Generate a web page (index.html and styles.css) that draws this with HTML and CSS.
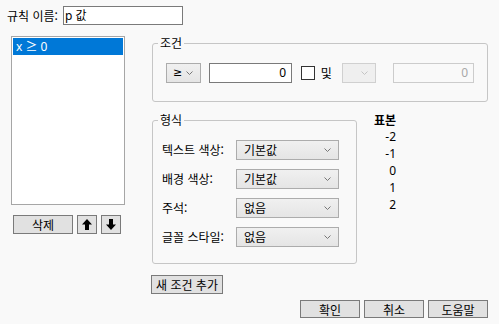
FILE: index.html
```html
<!DOCTYPE html>
<html lang="ko">
<head>
    <meta charset="UTF-8">
    <title>규칙</title>
    <link rel="stylesheet" href="styles.css">
</head>
<body>
    <div class="page">
        <div class="name-row">
            <span class="name-label">규칙 이름:</span>
            <div class="field name-field">p 값</div>
        </div>

        <div class="main">
            <div class="left-col">
                <div class="rule-list">
                    <div class="rule-item selected">x ≥ 0</div>
                </div>
                <div class="list-buttons">
                    <button class="button delete-button">삭제</button>
                    <button class="button arrow-button">
                        <svg width="10" height="11" viewBox="0 0 10 11"><path d="M5 0 L10 5.5 H7 V11 H3 V5.5 H0 Z" fill="#000"/></svg>
                    </button>
                    <button class="button arrow-button">
                        <svg width="10" height="11" viewBox="0 0 10 11"><path d="M5 11 L10 5.5 H7 V0 H3 V5.5 H0 Z" fill="#000"/></svg>
                    </button>
                </div>
            </div>

            <div class="right-col">
                <fieldset class="group condition-group">
                    <legend>조건</legend>
                    <div class="condition-row">
                        <div class="dropdown op-dropdown">
                            <span class="op-text">≥</span>
                            <svg class="chevron" width="7" height="5" viewBox="0 0 7 5"><path d="M0.5 0.5 L3.5 3.5 L6.5 0.5" fill="none" stroke="#777"/></svg>
                        </div>
                        <div class="field value-field">0</div>
                        <span class="checkbox"></span>
                        <span class="and-label">및</span>
                        <div class="dropdown op-dropdown disabled">
                            <svg class="chevron" width="7" height="5" viewBox="0 0 7 5"><path d="M0.5 0.5 L3.5 3.5 L6.5 0.5" fill="none" stroke="#c4c4c4"/></svg>
                        </div>
                        <div class="field value-field disabled">0</div>
                    </div>
                </fieldset>

                <div class="format-row">
                    <fieldset class="group format-group">
                        <legend>형식</legend>
                        <div class="format-line">
                            <span class="format-label">텍스트 색상:</span>
                            <div class="dropdown format-dropdown">
                                <span>기본값</span>
                                <svg class="chevron" width="7" height="5" viewBox="0 0 7 5"><path d="M0.5 0.5 L3.5 3.5 L6.5 0.5" fill="none" stroke="#777"/></svg>
                            </div>
                        </div>
                        <div class="format-line">
                            <span class="format-label">배경 색상:</span>
                            <div class="dropdown format-dropdown">
                                <span>기본값</span>
                                <svg class="chevron" width="7" height="5" viewBox="0 0 7 5"><path d="M0.5 0.5 L3.5 3.5 L6.5 0.5" fill="none" stroke="#777"/></svg>
                            </div>
                        </div>
                        <div class="format-line">
                            <span class="format-label">주석:</span>
                            <div class="dropdown format-dropdown">
                                <span>없음</span>
                                <svg class="chevron" width="7" height="5" viewBox="0 0 7 5"><path d="M0.5 0.5 L3.5 3.5 L6.5 0.5" fill="none" stroke="#777"/></svg>
                            </div>
                        </div>
                        <div class="format-line">
                            <span class="format-label">글꼴 스타일:</span>
                            <div class="dropdown format-dropdown">
                                <span>없음</span>
                                <svg class="chevron" width="7" height="5" viewBox="0 0 7 5"><path d="M0.5 0.5 L3.5 3.5 L6.5 0.5" fill="none" stroke="#777"/></svg>
                            </div>
                        </div>
                    </fieldset>

                    <div class="sample">
                        <div class="sample-title">표본</div>
                        <div>-2</div>
                        <div>-1</div>
                        <div>0</div>
                        <div>1</div>
                        <div>2</div>
                    </div>
                </div>

                <button class="button add-button">새 조건 추가</button>
            </div>
        </div>

        <div class="dialog-buttons">
            <button class="button dialog-button">확인</button>
            <button class="button dialog-button">취소</button>
            <button class="button dialog-button">도움말</button>
        </div>
    </div>
</body>
</html>
```

FILE: styles.css
```css
body {
    margin: 0;
    background-color: #f9f9f9;
    color: #000000;
    font-family: "Noto Sans CJK KR", "Noto Sans", sans-serif;
    font-size: 12px;
    line-height: 16px;
}
.page {
    padding: 6px 11px 0 7px;
}
.name-row {
    display: flex;
    align-items: center;
    gap: 1px;
}
.name-label {
    width: 55px;
    white-space: nowrap;
}
.field {
    box-sizing: border-box;
    height: 19px;
    background-color: #ffffff;
    border: 1px solid #7a7a7a;
    padding: 0 2px;
    line-height: 17px;
}
.name-field {
    width: 120px;
    padding-left: 1px;
    font-family: "Noto Sans", "Noto Sans CJK KR", sans-serif;
}
.main {
    display: flex;
    align-items: flex-start;
    gap: 27px;
    margin-top: 10px;
    margin-left: 4px;
}
.left-col {
    flex-shrink: 0;
    width: 114px;
    margin-top: 1px;
}
.rule-list {
    box-sizing: border-box;
    height: 169px;
    background-color: #ffffff;
    border: 1px solid #a6a6a6;
    padding: 1px;
}
.rule-item {
    height: 17px;
    line-height: 17px;
    padding-left: 3px;
    font-family: "Noto Sans", "Noto Sans CJK KR", sans-serif;
}
.rule-item.selected {
    background-color: #0078d7;
    color: #ffffff;
}
.list-buttons {
    display: flex;
    gap: 4px;
    margin-top: 10px;
    margin-left: 2px;
}
.button {
    box-sizing: border-box;
    height: 19px;
    padding: 0;
    background-color: #e1e1e1;
    border: 1px solid #7a7a7a;
    color: #000000;
    font-family: "Noto Sans CJK KR", sans-serif;
    font-size: 12px;
    line-height: 16px;
    cursor: pointer;
}
.delete-button {
    width: 60px;
}
.arrow-button {
    width: 20px;
    display: flex;
    align-items: center;
    justify-content: center;
}
.right-col {
    flex: 1;
    min-width: 0;
    display: flex;
    flex-direction: column;
    align-items: flex-start;
}
.group {
    box-sizing: border-box;
    min-width: 0;
    margin: 0;
    padding-left: 0;
    padding-right: 0;
    border: 1px solid #c6c6c6;
    border-radius: 3px;
}
.group legend {
    padding: 0 2px;
    margin-left: 5px;
    line-height: 16px;
}
.condition-group {
    width: 100%;
    padding-top: 12px;
    padding-bottom: 18px;
}
.condition-row {
    display: flex;
    align-items: center;
    padding: 0 13px;
}
.dropdown {
    box-sizing: border-box;
    height: 20px;
    display: flex;
    align-items: center;
    justify-content: space-between;
    background: linear-gradient(#f0f0f0, #e5e5e5);
    border: 1px solid #acacac;
    padding: 0 7px 0 6px;
}
.dropdown.disabled {
    background: #efefef;
    border-color: #d0d0d0;
    justify-content: flex-end;
}
.op-dropdown {
    width: 36px;
}
.op-text {
    font-family: "DejaVu Sans", sans-serif;
    font-size: 11px;
}
.value-field {
    width: 86px;
    height: 20px;
    margin-left: 8px;
    text-align: right;
    padding-right: 5px;
    font-family: "Noto Sans", sans-serif;
}
.value-field.disabled {
    width: 84px;
    background-color: #f9f9f9;
    border-color: #cccccc;
    color: #a8a8a8;
}
.checkbox {
    box-sizing: border-box;
    width: 14px;
    height: 14px;
    margin-left: 9px;
    background-color: #ffffff;
    border: 1px solid #333333;
}
.and-label {
    margin-left: 6px;
    margin-right: 10px;
}
.condition-row .disabled.dropdown {
    width: 35px;
    margin-right: 9px;
}
.format-row {
    display: flex;
    align-items: flex-start;
    gap: 15px;
    margin-top: 10px;
}
.format-group {
    width: 205px;
    padding-top: 12px;
    padding-bottom: 16px;
}
.format-line {
    display: flex;
    align-items: center;
    justify-content: space-between;
    height: 20px;
    margin: 0 17px 9px 9px;
}
.format-line:last-child {
    margin-bottom: 0;
}
.format-dropdown {
    width: 103px;
    padding-left: 7px;
}
.sample {
    width: 24px;
    text-align: right;
    line-height: 17px;
    margin-top: -1px;
    font-family: "Noto Sans", "Noto Sans CJK KR", sans-serif;
}
.sample-title {
    font-family: "Noto Sans CJK KR", sans-serif;
    font-weight: bold;
}
.add-button {
    width: 72px;
    margin-top: 11px;
    margin-left: -1px;
}
.dialog-buttons {
    display: flex;
    justify-content: flex-end;
    gap: 4px;
    margin-top: 6px;
}
.dialog-button {
    width: 60px;
    height: 18px;
    line-height: 15px;
}
```
